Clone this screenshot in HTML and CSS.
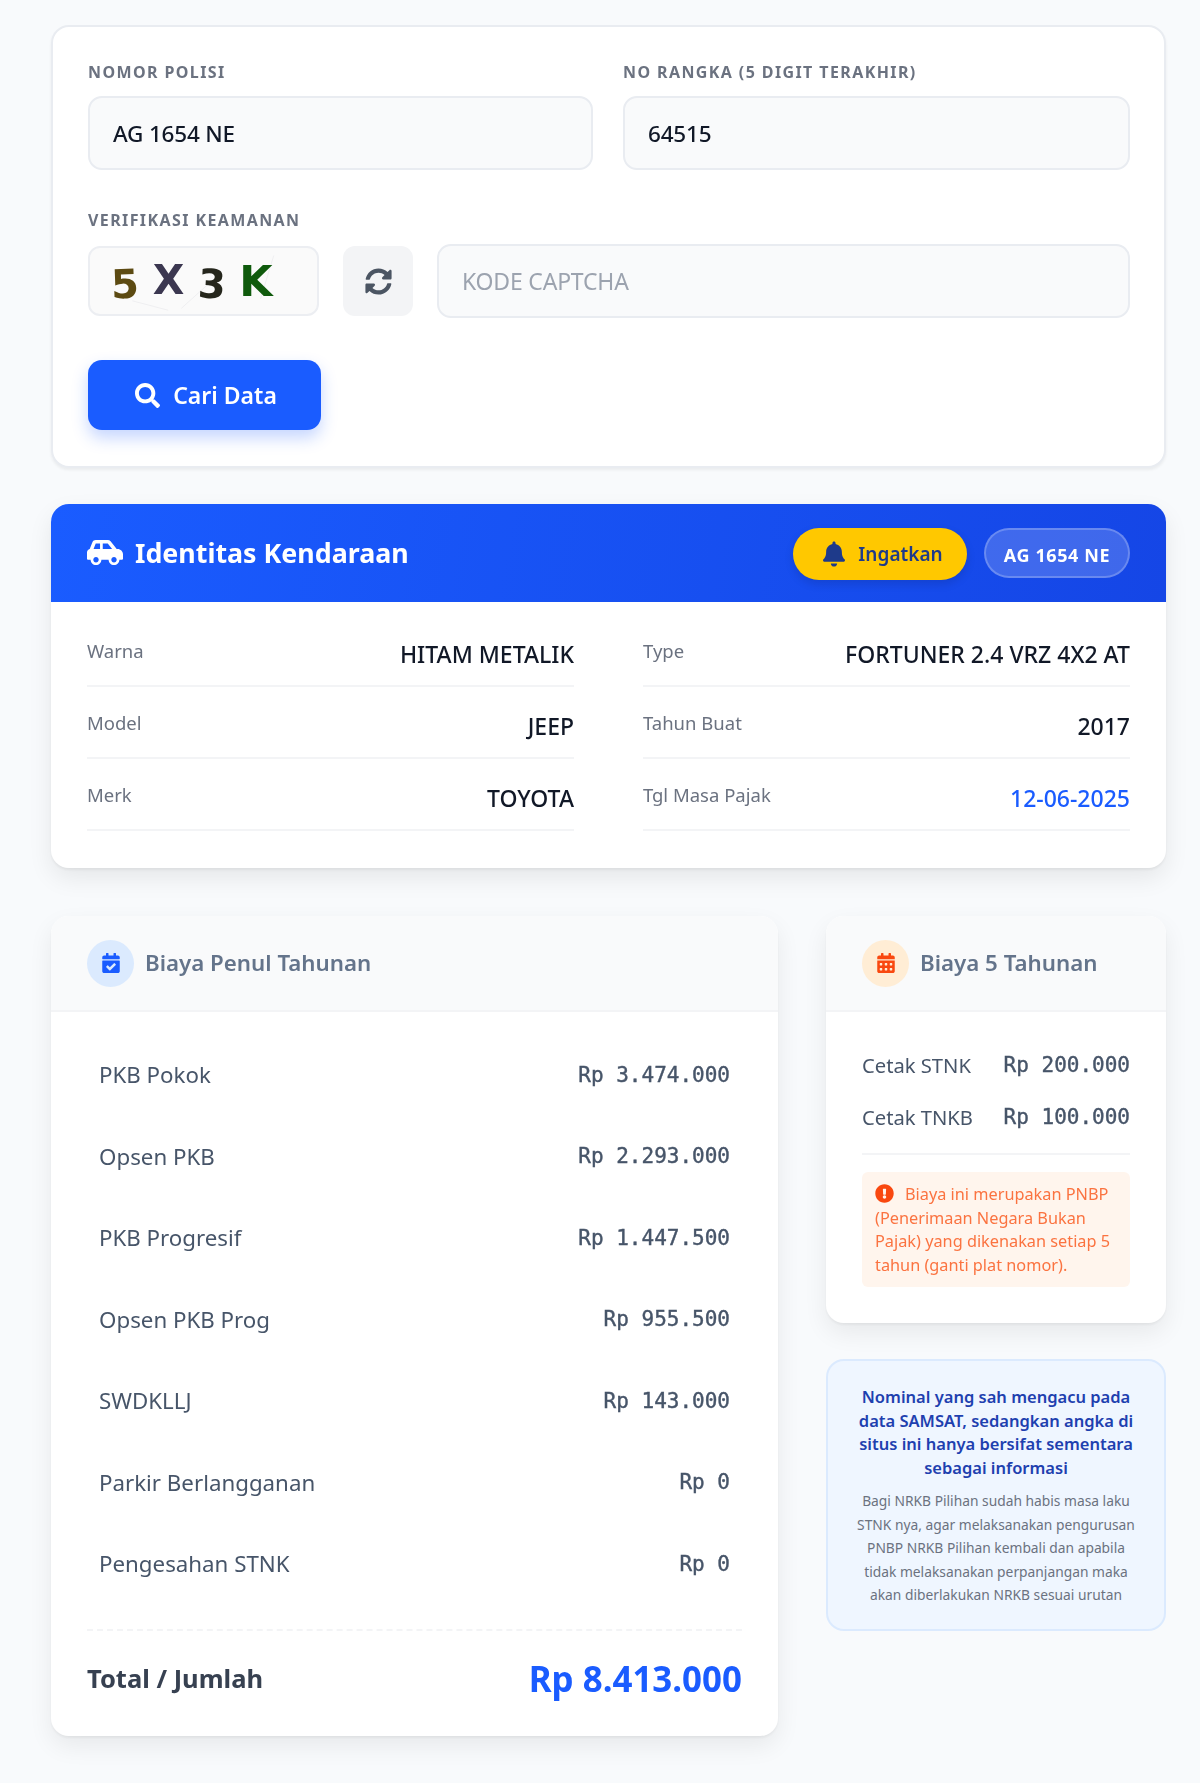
FILE: index.html
```html
<!DOCTYPE html>
<html lang="id">
<head>
<meta charset="utf-8">
<title>Cek Pajak Kendaraan</title>
<link rel="stylesheet" href="styles.css">
</head>
<body>
<svg class="sprite" width="0" height="0" aria-hidden="true">
  <symbol id="i-search" viewBox="0 0 512 512"><path d="M505 442.7L405.3 343c-4.5-4.5-10.6-7-17-7H372c27.6-35.3 44-79.7 44-128C416 93.1 322.9 0 208 0S0 93.1 0 208s93.1 208 208 208c48.3 0 92.7-16.4 128-44v16.3c0 6.4 2.5 12.5 7 17l99.7 99.7c9.4 9.4 24.6 9.4 33.9 0l28.3-28.3c9.4-9.4 9.4-24.6.1-34zM208 336c-70.7 0-128-57.2-128-128 0-70.7 57.2-128 128-128 70.7 0 128 57.2 128 128 0 70.7-57.2 128-128 128z"/></symbol>
  <symbol id="i-sync" viewBox="0 0 512 512"><path d="M370.72 133.28C339.458 104.008 298.888 87.962 255.848 88c-77.458.068-144.328 53.178-162.791 126.85-1.344 5.363-6.122 9.15-11.651 9.15H24.103c-7.498 0-13.194-6.807-11.807-14.176C33.933 94.924 134.813 8 256 8c66.448 0 126.791 26.136 171.315 68.685L463.03 40.97C478.149 25.851 504 36.559 504 57.941V192c0 13.255-10.745 24-24 24H345.941c-21.382 0-32.09-25.851-16.971-40.971l41.75-41.749zM32 296h134.059c21.382 0 32.09 25.851 16.971 40.971l-41.75 41.75c31.262 29.273 71.835 45.319 114.876 45.28 77.418-.07 144.315-53.144 162.787-126.849 1.344-5.363 6.122-9.15 11.651-9.15h57.304c7.498 0 13.194 6.807 11.807 14.176C478.067 417.076 377.187 504 256 504c-66.448 0-126.791-26.136-171.315-68.685L48.97 471.03C33.851 486.149 8 475.441 8 454.059V320c0-13.255 10.745-24 24-24z"/></symbol>
  <symbol id="i-car" viewBox="0 0 640 512"><path d="M544 192h-16L419.22 56.02A64.025 64.025 0 0 0 369.24 32H155.33c-26.17 0-49.7 15.93-59.42 40.23L48 194.26C20.44 201.4 0 226.21 0 256v112c0 8.84 7.16 16 16 16h48c0 53.02 42.98 96 96 96s96-42.98 96-96h128c0 53.02 42.98 96 96 96s96-42.98 96-96h48c8.84 0 16-7.16 16-16v-80c0-53.02-42.98-96-96-96zM160 432c-26.47 0-48-21.53-48-48s21.53-48 48-48 48 21.53 48 48-21.53 48-48 48zm72-240H116.93l38.4-96H232v96zm48 0V96h89.24l76.8 96H280zm200 240c-26.47 0-48-21.53-48-48s21.53-48 48-48 48 21.53 48 48-21.53 48-48 48z"/></symbol>
  <symbol id="i-bell" viewBox="0 0 448 512"><path d="M224 512c35.32 0 63.97-28.65 63.97-64H160.03c0 35.35 28.65 64 63.97 64zm215.39-149.71c-19.32-20.76-55.47-51.99-55.47-154.29 0-77.7-54.48-139.9-127.94-155.16V32c0-17.67-14.32-32-31.98-32s-31.98 14.33-31.98 32v20.84C118.56 68.1 64.08 130.3 64.08 208c0 102.3-36.15 133.53-55.47 154.29-6 6.45-8.66 14.16-8.61 21.71.11 16.4 12.98 32 32.1 32h383.8c19.12 0 32-15.6 32.1-32 .05-7.55-2.61-15.27-8.61-21.71z"/></symbol>
  <symbol id="i-cal-check" viewBox="0 0 448 512"><path d="M436 160H12c-6.627 0-12-5.373-12-12v-36c0-26.51 21.49-48 48-48h48V12c0-6.627 5.373-12 12-12h40c6.627 0 12 5.373 12 12v52h128V12c0-6.627 5.373-12 12-12h40c6.627 0 12 5.373 12 12v52h48c26.51 0 48 21.49 48 48v36c0 6.627-5.373 12-12 12zM12 192h424c6.627 0 12 5.373 12 12v260c0 26.51-21.49 48-48 48H48c-26.51 0-48-21.49-48-48V204c0-6.627 5.373-12 12-12zm333.296 95.947l-28.169-28.398c-4.667-4.705-12.265-4.736-16.970-.068L194.12 364.665l-45.98-46.352c-4.667-4.705-12.266-4.736-16.971-.068l-28.397 28.17c-4.705 4.667-4.736 12.265-.068 16.97l82.601 83.269c4.667 4.705 12.265 4.736 16.970.068l142.953-141.805c4.705-4.667 4.736-12.265.068-16.970z"/></symbol>
  <symbol id="i-cal" viewBox="0 0 448 512"><path d="M0 464c0 26.5 21.5 48 48 48h352c26.5 0 48-21.5 48-48V192H0v272zm320-196c0-6.6 5.4-12 12-12h40c6.6 0 12 5.4 12 12v40c0 6.6-5.4 12-12 12h-40c-6.6 0-12-5.4-12-12v-40zm0 128c0-6.6 5.4-12 12-12h40c6.6 0 12 5.4 12 12v40c0 6.6-5.4 12-12 12h-40c-6.6 0-12-5.4-12-12v-40zM192 268c0-6.6 5.4-12 12-12h40c6.6 0 12 5.4 12 12v40c0 6.6-5.4 12-12 12h-40c-6.6 0-12-5.4-12-12v-40zm0 128c0-6.6 5.4-12 12-12h40c6.6 0 12 5.4 12 12v40c0 6.6-5.4 12-12 12h-40c-6.6 0-12-5.4-12-12v-40zM64 268c0-6.6 5.4-12 12-12h40c6.6 0 12 5.4 12 12v40c0 6.6-5.4 12-12 12H76c-6.6 0-12-5.4-12-12v-40zm0 128c0-6.6 5.4-12 12-12h40c6.6 0 12 5.4 12 12v40c0 6.6-5.4 12-12 12H76c-6.6 0-12-5.4-12-12v-40zM400 64h-48V16c0-8.8-7.2-16-16-16h-32c-8.8 0-16 7.2-16 16v48H160V16c0-8.8-7.2-16-16-16h-32c-8.8 0-16 7.2-16 16v48H48C21.5 64 0 85.5 0 112v48h448v-48c0-26.5-21.5-48-48-48z"/></symbol>
  <symbol id="i-excl" viewBox="0 0 512 512"><path d="M504 256c0 136.997-111.043 248-248 248S8 392.997 8 256C8 119.083 119.043 8 256 8s248 111.083 248 248zm-248 50c-25.405 0-46 20.595-46 46s20.595 46 46 46 46-20.595 46-46-20.595-46-46-46zm-43.673-165.346l7.418 136c.347 6.364 5.609 11.346 11.982 11.346h48.546c6.373 0 11.635-4.982 11.982-11.346l7.418-136c.375-6.874-5.098-12.654-11.982-12.654h-63.383c-6.884 0-12.356 5.78-11.981 12.654z"/></symbol>
</svg>

<main class="page">
  <section class="card search">
    <div class="two-col">
      <div class="field">
        <label class="label">NOMOR POLISI</label>
        <input class="input filled" type="text" value="AG 1654 NE">
      </div>
      <div class="field">
        <label class="label">NO RANGKA (5 DIGIT TERAKHIR)</label>
        <input class="input filled" type="text" value="64515">
      </div>
    </div>
    <div class="field verify">
      <label class="label">VERIFIKASI KEAMANAN</label>
      <div class="captcha-row">
        <div class="captcha">
          <svg class="noise" viewBox="0 0 231 70" aria-hidden="true"><path d="M40 56L78 66M92 64L132 28M190 8L176 54"/></svg>
          <span class="ch c1">5</span><span class="ch c2">X</span><span class="ch c3">3</span><span class="ch c4">K</span>
        </div>
        <button class="refresh" type="button" aria-label="Muat ulang"><svg class="ic"><use href="#i-sync"/></svg></button>
        <input class="input code" type="text" placeholder="KODE CAPTCHA">
      </div>
    </div>
    <button class="submit" type="button"><svg class="ic"><use href="#i-search"/></svg>Cari Data</button>
  </section>

  <section class="card identity">
    <header class="id-head">
      <h2 class="id-title"><svg class="ic"><use href="#i-car"/></svg>Identitas Kendaraan</h2>
      <div class="id-actions">
        <button class="remind" type="button"><svg class="ic"><use href="#i-bell"/></svg>Ingatkan</button>
        <span class="plate">AG 1654 NE</span>
      </div>
    </header>
    <div class="id-body">
      <div class="id-row"><span class="k">Warna</span><span class="v">HITAM METALIK</span></div>
      <div class="id-row"><span class="k">Type</span><span class="v">FORTUNER 2.4 VRZ 4X2 AT</span></div>
      <div class="id-row"><span class="k">Model</span><span class="v">JEEP</span></div>
      <div class="id-row"><span class="k">Tahun Buat</span><span class="v">2017</span></div>
      <div class="id-row"><span class="k">Merk</span><span class="v">TOYOTA</span></div>
      <div class="id-row"><span class="k">Tgl Masa Pajak</span><span class="v blue">12-06-2025</span></div>
    </div>
  </section>

  <div class="costs">
    <section class="card cost-main">
      <header class="cost-head">
        <span class="bubble b-blue"><svg class="ic"><use href="#i-cal-check"/></svg></span>
        <h3>Biaya Penul Tahunan</h3>
      </header>
      <div class="cost-body">
        <div class="line"><span>PKB Pokok</span><span class="mono">Rp 3.474.000</span></div>
        <div class="line"><span>Opsen PKB</span><span class="mono">Rp 2.293.000</span></div>
        <div class="line"><span>PKB Progresif</span><span class="mono">Rp 1.447.500</span></div>
        <div class="line"><span>Opsen PKB Prog</span><span class="mono">Rp 955.500</span></div>
        <div class="line"><span>SWDKLLJ</span><span class="mono">Rp 143.000</span></div>
        <div class="line"><span>Parkir Berlangganan</span><span class="mono">Rp 0</span></div>
        <div class="line"><span>Pengesahan STNK</span><span class="mono">Rp 0</span></div>
        <div class="total"><span class="t-label">Total / Jumlah</span><span class="t-value">Rp 8.413.000</span></div>
      </div>
    </section>

    <aside class="side">
      <section class="card cost-five">
        <header class="cost-head">
          <span class="bubble b-orange"><svg class="ic"><use href="#i-cal"/></svg></span>
          <h3>Biaya 5 Tahunan</h3>
        </header>
        <div class="five-body">
          <div class="five-lines">
            <div class="five-line"><span>Cetak STNK</span><span class="mono">Rp 200.000</span></div>
            <div class="five-line"><span>Cetak TNKB</span><span class="mono">Rp 100.000</span></div>
          </div>
          <p class="pnbp"><svg class="ic"><use href="#i-excl"/></svg>Biaya ini merupakan PNBP (Penerimaan Negara Bukan Pajak) yang dikenakan setiap 5 tahun (ganti plat nomor).</p>
        </div>
      </section>
      <section class="notice">
        <p class="n-title">Nominal yang sah mengacu pada data SAMSAT, sedangkan angka di situs ini hanya bersifat sementara sebagai informasi</p>
        <p class="n-text">Bagi NRKB Pilihan sudah habis masa laku STNK nya, agar melaksanakan pengurusan PNBP NRKB Pilihan kembali dan apabila tidak melaksanakan perpanjangan maka akan diberlakukan NRKB sesuai urutan</p>
      </section>
    </aside>
  </div>
</main>
</body>
</html>
```

FILE: styles.css
```css
* { box-sizing: border-box; }
html, body { margin: 0; padding: 0; }
body {
  background: #f8fafc;
  font-family: "Noto Sans", "Liberation Sans", sans-serif;
  color: #111827;
  min-height: 1783px;
}
.sprite { position: absolute; }
.ic { display: block; fill: currentColor; flex: none; }
.page {
  padding: 25px 34px 0 51px;
  display: flex;
  flex-direction: column;
  gap: 36px;
  filter: blur(.35px);
}
.card {
  background: #fff;
  border-radius: 18px;
  overflow: hidden;
}

/* search form */
.search {
  height: 443px;
  padding: 35px 34px 0 35px;
  border: 2px solid #e9ecf1;
  box-shadow: 0 2px 3px rgba(0, 0, 0, .06);
}
.two-col {
  display: grid;
  grid-template-columns: 505px 1fr;
  gap: 30px;
}
.field { display: flex; flex-direction: column; }
.label {
  font-size: 16px;
  font-weight: 700;
  letter-spacing: 1.4px;
  color: #6b7280;
  line-height: 20px;
  margin-bottom: 14px;
}
.input {
  width: 100%;
  height: 74px;
  padding: 0 23px;
  background: #f9fafb;
  border: 2px solid #e9ecf1;
  border-radius: 14px;
  font-family: inherit;
  font-size: 22.5px;
  font-weight: 500;
  letter-spacing: -.2px;
  color: #111827;
  outline: none;
}
.input::placeholder { color: #9ca3af; font-weight: 400; opacity: 1; }
.code { font-size: 23px; }
.verify { margin-top: 40px; }
.verify .label { margin-bottom: 14px; }
.captcha-row { display: flex; align-items: center; gap: 24px; }
.captcha {
  position: relative;
  flex: none;
  width: 231px;
  height: 70px;
  background: #fafafa;
  border: 2px solid #eceef2;
  border-radius: 12px;
  display: flex;
  align-items: center;
  padding-left: 21px;
  gap: 16px;
  font-family: "DejaVu Sans", sans-serif;
  font-weight: 700;
  font-size: 40px;
  line-height: 1;
}
.noise {
  position: absolute;
  inset: 0;
  width: 100%;
  height: 100%;
  fill: none;
  stroke: #eeeef0;
  stroke-width: 1;
}
.ch { display: block; position: relative; }
.c1 { color: #5c4a12; transform: translateY(3px) rotate(-2deg); }
.c2 { color: #3b3750; transform: translateY(-1px); font-size: 41px; margin-left: -2px; }
.c3 { color: #25261c; transform: translateY(3px) rotate(3deg); margin-left: -2px; }
.c4 { color: #0f5a0c; font-size: 43px; margin-left: -3px; }
.refresh {
  flex: none;
  width: 70px;
  height: 70px;
  border: 0;
  border-radius: 12px;
  background: #f3f4f6;
  color: #4b5563;
  display: flex;
  align-items: center;
  justify-content: center;
  padding: 0;
}
.refresh .ic { width: 27px; height: 27px; }
.code { flex: 1; min-width: 0; }
.submit {
  margin-top: 42px;
  width: 233px;
  height: 70px;
  border: 0;
  border-radius: 14px;
  background: #1a5cff;
  color: #fff;
  font-family: inherit;
  font-size: 23px;
  font-weight: 600;
  display: flex;
  align-items: center;
  justify-content: center;
  gap: 13px;
  padding-left: 9px;
  box-shadow: 0 8px 16px rgba(26, 92, 255, .25);
}
.submit .ic { width: 25px; height: 25px; }

/* identity */
.identity {
  box-shadow: 0 2px 3px rgba(0, 0, 0, .06), 0 10px 24px rgba(0, 0, 0, .08);
  height: 364px;
}
.id-head {
  height: 98px;
  padding: 0 36px 2px;
  background: linear-gradient(100deg, #1a5cff, #1546e6);
  color: #fff;
  display: flex;
  align-items: center;
  justify-content: space-between;
}
.id-title {
  margin: 0;
  display: flex;
  align-items: center;
  gap: 12px;
  font-size: 26.8px;
  font-weight: 700;
}
.id-title .ic { width: 36px; height: 29px; }
.id-actions { display: flex; align-items: flex-start; gap: 17px; padding-top: 4px; }
.remind {
  height: 52px;
  width: 174px;
  border: 0;
  border-radius: 26px;
  background: #ffc800;
  color: #1e3a8a;
  font-family: inherit;
  font-size: 19px;
  font-weight: 600;
  display: flex;
  align-items: center;
  justify-content: center;
  gap: 13px;
  padding: 0 0 0 6px;
  box-shadow: 0 4px 10px rgba(0, 0, 0, .12);
}
.remind .ic { width: 22px; height: 26px; }
.plate {
  height: 50px;
  width: 146px;
  border: 2px solid rgba(255, 255, 255, .22);
  border-radius: 25px;
  background: rgba(255, 255, 255, .18);
  font-size: 18px;
  font-weight: 700;
  letter-spacing: .6px;
  display: flex;
  align-items: center;
  justify-content: center;
  padding-top: 3px;
}
.id-body {
  display: grid;
  grid-template-columns: 487px 1fr;
  column-gap: 69px;
  padding: 13px 36px 0;
}
.id-row {
  height: 72px;
  padding-top: 8px;
  border-bottom: 2px solid #f3f4f6;
  display: flex;
  justify-content: space-between;
  align-items: center;
}
.k { font-size: 18.5px; color: #6b7280; transform: translateY(-4px); }
.v { font-size: 23px; font-weight: 500; color: #111827; }
.v.blue { color: #1a5cff; }

/* cost tables */
.costs {
  display: grid;
  grid-template-columns: 727px 340px;
  column-gap: 48px;
  align-items: start;
  margin-top: 12px;
}
.cost-main, .cost-five { box-shadow: 0 2px 3px rgba(0, 0, 0, .05), 0 10px 24px rgba(0, 0, 0, .07); }
.cost-main { height: 820px; }
.cost-head {
  height: 96px;
  padding: 0 36px;
  background: #f9fafb;
  border-bottom: 2px solid #f3f4f6;
  display: flex;
  align-items: center;
  gap: 11px;
}
.cost-head h3 {
  margin: -2px 0 0;
  font-size: 22.3px;
  font-weight: 600;
  color: #64748b;
}
.bubble {
  width: 47px;
  height: 47px;
  border-radius: 50%;
  display: flex;
  align-items: center;
  justify-content: center;
  flex: none;
}
.bubble .ic { width: 18px; height: 20px; }
.b-blue { background: #dbeafe; color: #1a5cff; }
.b-orange { background: #ffedd5; color: #f9480f; }
.cost-body { padding: 22px 36px 0; }
.line {
  height: 81.5px;
  padding: 0 12px;
  display: flex;
  justify-content: space-between;
  align-items: center;
  font-size: 22.3px;
  color: #475569;
}
.mono {
  font-family: "DejaVu Sans Mono", "Liberation Mono", monospace;
  font-size: 21px;
  -webkit-text-stroke: .4px currentColor;
}
.total {
  margin-top: 24px;
  border-top: 2px dashed #f3f4f6;
  padding-top: 24px;
  display: flex;
  justify-content: space-between;
  align-items: center;
}
.t-label { font-size: 25.5px; font-weight: 700; color: #374151; }
.t-value { font-size: 34.9px; font-weight: 700; color: #1a5cff; }

.side { display: flex; flex-direction: column; gap: 36px; }
.cost-five { height: 407px; }
.five-body { padding: 27px 36px 0; }
.five-lines { border-bottom: 2px solid #f3f4f6; padding-bottom: 10px; }
.five-line {
  height: 52px;
  display: flex;
  justify-content: space-between;
  align-items: center;
  font-size: 20.2px;
  color: #475569;
}
.pnbp {
  margin: 17px 0 0;
  padding: 11px 13px 10px;
  background: #fff5ed;
  border-radius: 6px;
  font-size: 16.3px;
  line-height: 23.5px;
  color: #fb7340;
}
.pnbp .ic {
  display: inline-block;
  width: 19px;
  height: 19px;
  color: #f9480f;
  vertical-align: -3px;
  margin-right: 11px;
}
.notice {
  height: 272px;
  background: #eff6ff;
  border: 2px solid #dbeafe;
  border-radius: 18px;
  padding: 24px 20px 0;
  text-align: center;
}
.n-title {
  margin: 0;
  font-size: 16.5px;
  line-height: 23.5px;
  font-weight: 600;
  color: #1e40af;
}
.n-text {
  margin: 10px 0 0;
  padding: 0 5px;
  font-size: 13.8px;
  line-height: 23.5px;
  color: #6b7280;
}
```
